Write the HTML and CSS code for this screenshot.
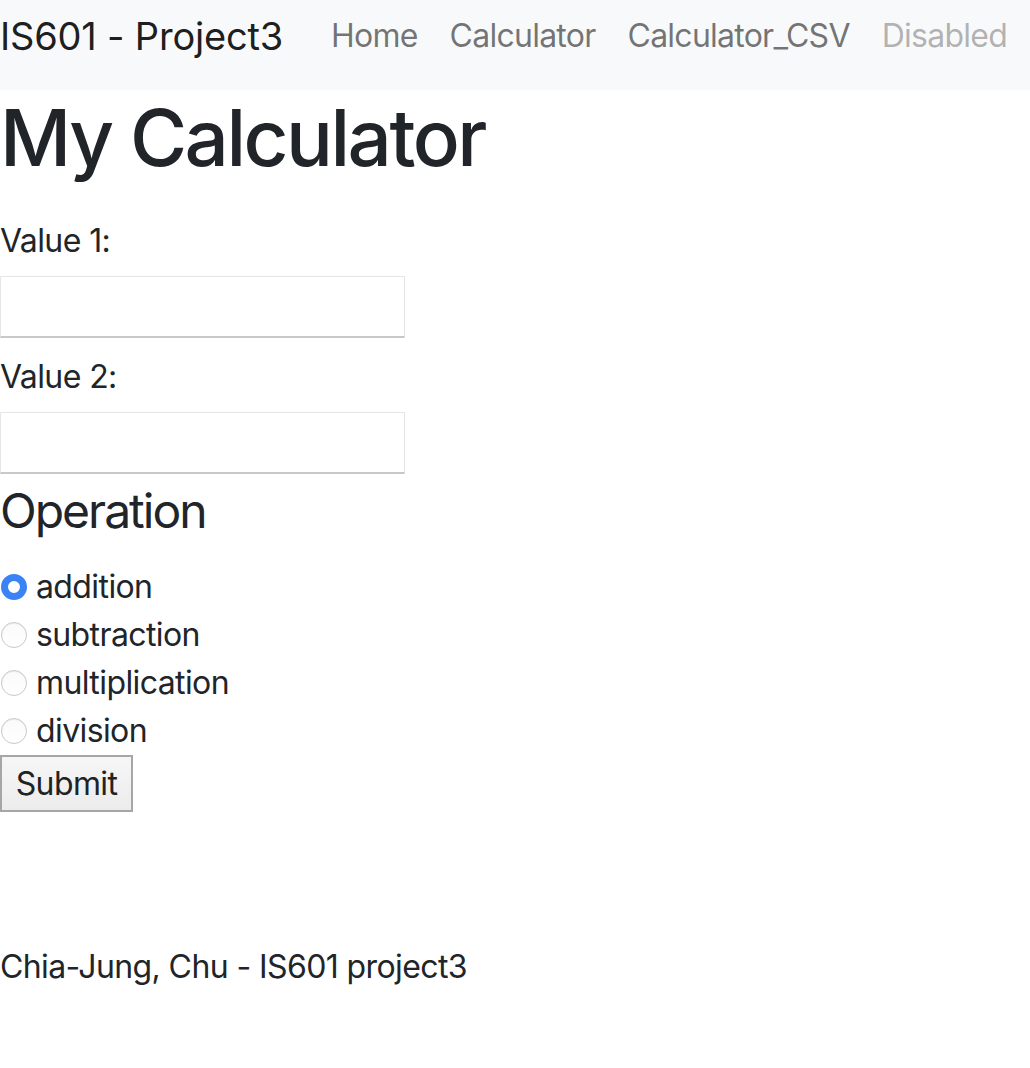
FILE: index.html
```html
<!DOCTYPE html>
<html lang="en">
<head>
<meta charset="utf-8">
<title>My Calculator</title>
<link rel="stylesheet" href="styles.css">
</head>
<body>
<nav class="navbar">
  <a class="brand" href="#">IS601 - Project3</a>
  <ul class="nav">
    <li><a class="nav-link" href="#">Home</a></li>
    <li><a class="nav-link" href="#">Calculator</a></li>
    <li><a class="nav-link" href="#">Calculator_CSV</a></li>
    <li><span class="nav-link disabled">Disabled</span></li>
  </ul>
</nav>
<main class="content">
  <h1 class="title">My Calculator</h1>
  <form class="calc-form">
    <label class="field-label" for="v1">Value 1:</label>
    <input class="field-input" id="v1" type="text">
    <label class="field-label" for="v2">Value 2:</label>
    <input class="field-input" id="v2" type="text">
    <h4 class="section-title">Operation</h4>
    <div class="radios">
      <label class="radio-row"><span class="radio checked"></span>addition</label>
      <label class="radio-row"><span class="radio"></span>subtraction</label>
      <label class="radio-row"><span class="radio"></span>multiplication</label>
      <label class="radio-row"><span class="radio"></span>division</label>
    </div>
    <button class="submit" type="button">Submit</button>
  </form>
</main>
<footer class="footer">Chia-Jung, Chu - IS601 project3</footer>
</body>
</html>
```
FILE: styles.css
```css
html, body {
  margin: 0;
  padding: 0;
}
body {
  font-family: Inter, "Liberation Sans", sans-serif;
  font-size: 32px;
  line-height: 48px;
  letter-spacing: -0.6px;
  color: #212529;
  background: #fff;
}
.navbar {
  display: flex;
  align-items: center;
  height: 90px;
  background: #f8f9fa;
  padding-bottom: 18px;
  box-sizing: border-box;
}
.brand {
  font-size: 38px;
  letter-spacing: -0.2px;
  color: rgba(0,0,0,.9);
  text-decoration: none;
  margin-right: 32px;
  white-space: nowrap;
}
.nav {
  display: flex;
  list-style: none;
  margin: 0;
  padding: 0;
}
.nav-link {
  display: block;
  padding: 0 16px;
  letter-spacing: -0.75px;
  color: rgba(0,0,0,.55);
  text-decoration: none;
  white-space: nowrap;
}
.nav-link.disabled {
  color: rgba(0,0,0,.3);
}
.content {
  display: flex;
  flex-direction: column;
}
.title {
  font-size: 78px;
  letter-spacing: -2.5px;
  font-weight: 500;
  line-height: 96px;
  margin: 0 0 31px;
}
.calc-form {
  display: flex;
  flex-direction: column;
  align-items: flex-start;
}
.field-label {
  display: block;
  margin-bottom: 11px;
}
.field-input {
  width: 405px;
  height: 62px;
  box-sizing: border-box;
  border: 1px solid #e6e6e6;
  border-bottom: 2px solid #c8c8c8;
  background: #fff;
  margin: 0 0 15px;
  padding: 0;
  font-size: 32px;
}
.section-title {
  font-size: 48px;
  letter-spacing: -2px;
  font-weight: 400;
  line-height: 44px;
  margin: 0 0 30px;
}
.radios {
  display: flex;
  flex-direction: column;
}
.radio-row {
  display: flex;
  align-items: center;
  gap: 9px;
}
.radio {
  width: 26px;
  height: 26px;
  box-sizing: border-box;
  border-radius: 50%;
  border: 1px solid #c9c9c9;
  background: linear-gradient(#fafafa, #fff);
  box-shadow: inset 0 1px 1px rgba(0,0,0,.06);
  margin-left: 1px;
}
.radio.checked {
  border: 7px solid #3b82f6;
  background: #fff;
  box-shadow: none;
}
.submit {
  font-family: inherit;
  font-size: 32px;
  letter-spacing: -0.6px;
  line-height: 40px;
  color: #222;
  width: 133px;
  height: 57px;
  padding: 0;
  border: 2px solid #a6a6a6;
  background: linear-gradient(#f6f6f6, #ececec);
  border-radius: 0;
}
.footer {
  margin-top: 131px;
}
```
